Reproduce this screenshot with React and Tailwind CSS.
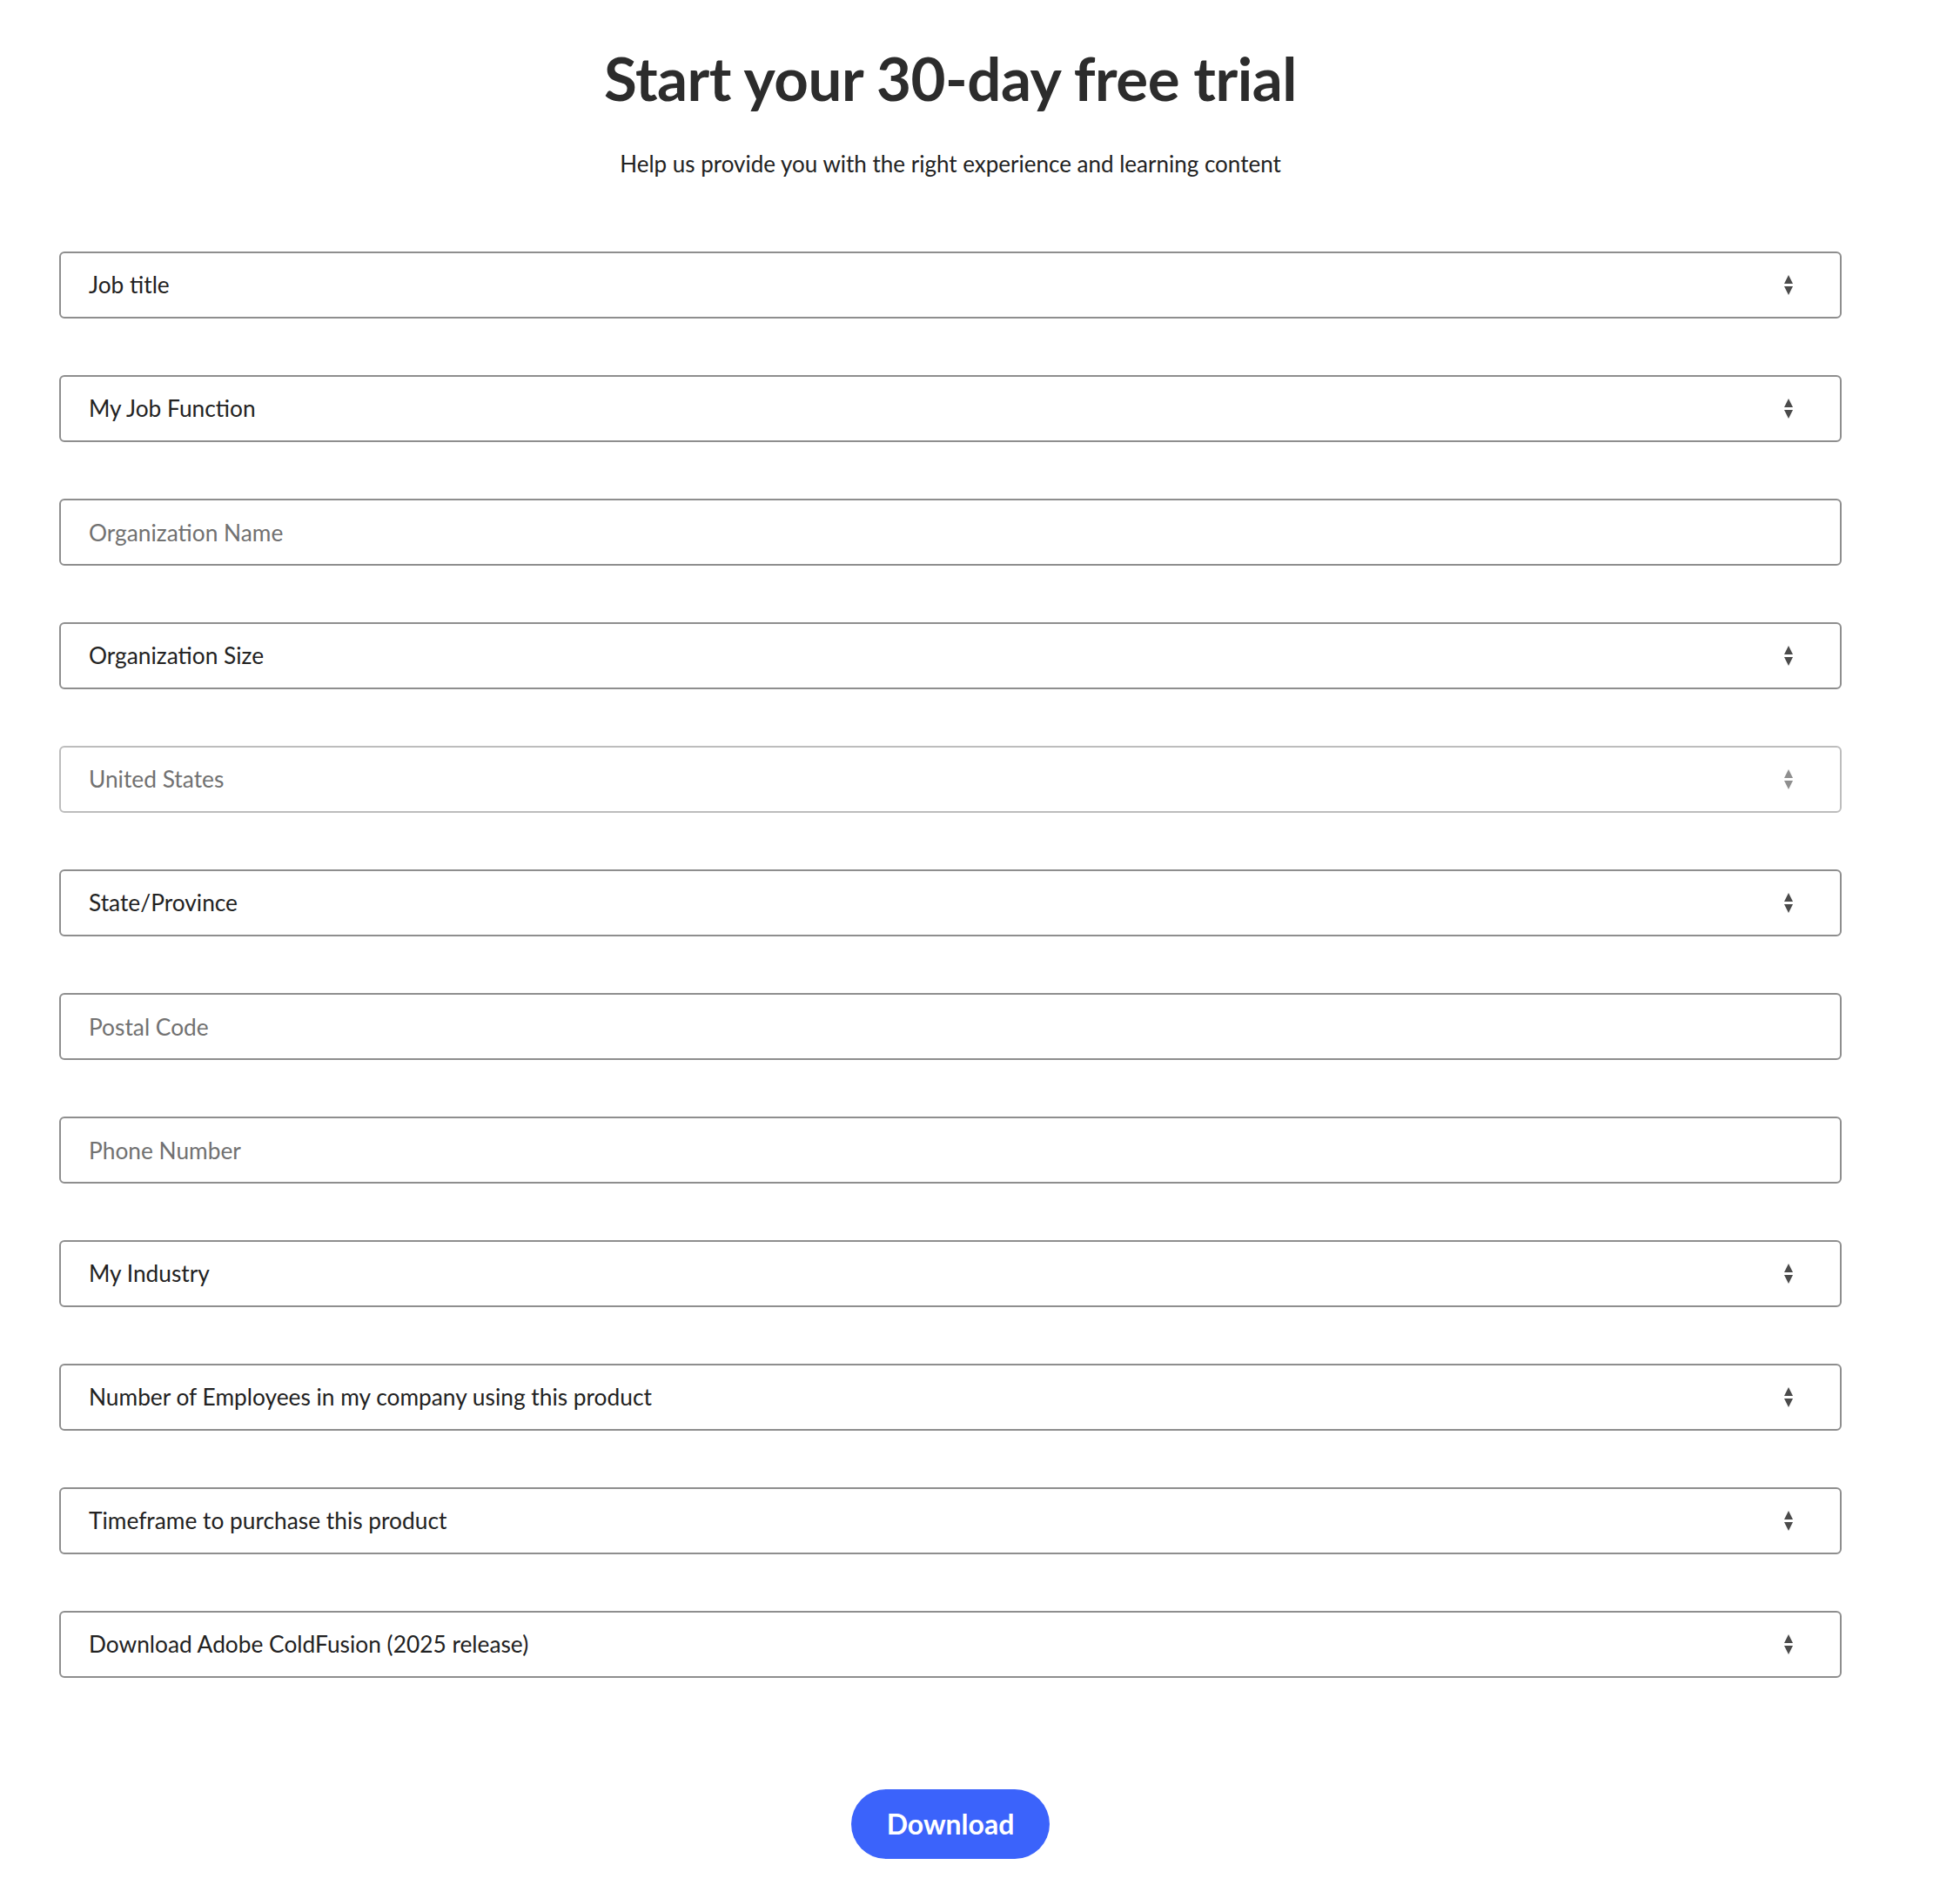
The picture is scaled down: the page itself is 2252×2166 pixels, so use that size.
const fields = [
  { label: "Job title", select: true },
  { label: "My Job Function", select: true },
  { label: "Organization Name", placeholder: true },
  { label: "Organization Size", select: true },
  { label: "United States", select: true, disabled: true },
  { label: "State/Province", select: true },
  { label: "Postal Code", placeholder: true },
  { label: "Phone Number", placeholder: true },
  { label: "My Industry", select: true },
  { label: "Number of Employees in my company using this product", select: true },
  { label: "Timeframe to purchase this product", select: true },
  { label: "Download Adobe ColdFusion (2025 release)", select: true },
];

function Arrows({ disabled }) {
  return (
    <svg width="12" height="26" viewBox="0 0 12 26" className={disabled ? "text-[#8f8f8f]" : "text-[#4b4b4b]"}>
      <path d="M6 1 L11 11 L1 11 Z" fill="currentColor" />
      <path d="M1 14 L11 14 L6 24 Z" fill="currentColor" />
    </svg>
  );
}

function Field({ label, select, placeholder, disabled }) {
  if (placeholder) {
    return (
      <input
        placeholder={label}
        className="w-full h-[77px] rounded-[6px] border-2 border-[#8e8e8e] bg-white px-[32px] text-[26.3px] text-[#2c2c2c] placeholder:text-[#717171] outline-none"
      />
    );
  }
  return (
    <div
      className={
        "w-full h-[77px] rounded-[6px] border-2 bg-white flex items-center justify-between pl-[32px] pr-[53px] " +
        (disabled ? "border-[#bdbdbd]" : "border-[#8e8e8e]")
      }
    >
      <span className={"text-[26.3px] " + (disabled ? "text-[#717171]" : "text-[#222222]")}>{label}</span>
      <Arrows disabled={disabled} />
    </div>
  );
}

export default function App() {
  return (
    <div className="min-h-[2166px] bg-white font-['Lato',sans-serif]">
      <div className="ml-[68px] w-[2048px] flex flex-col">
        <h1 className="mt-[44px] text-center text-[69px] leading-[92px] font-bold text-[#2c2c2c] tracking-[-0.5px]">
          Start your 30-day free trial
        </h1>
        <p className="mt-[34px] text-center text-[26px] leading-[36px] text-[#222222]">
          Help us provide you with the right experience and learning content
        </p>
        <form className="mt-[83px] flex flex-col gap-[65px]">
          {fields.map((f) => (
            <Field key={f.label} {...f} />
          ))}
        </form>
        <div className="mt-[128px] flex justify-center">
          <button className="w-[228px] h-[80px] rounded-full bg-[#3b63fb] text-white text-[32px] font-bold">
            Download
          </button>
        </div>
      </div>
    </div>
  );
}
